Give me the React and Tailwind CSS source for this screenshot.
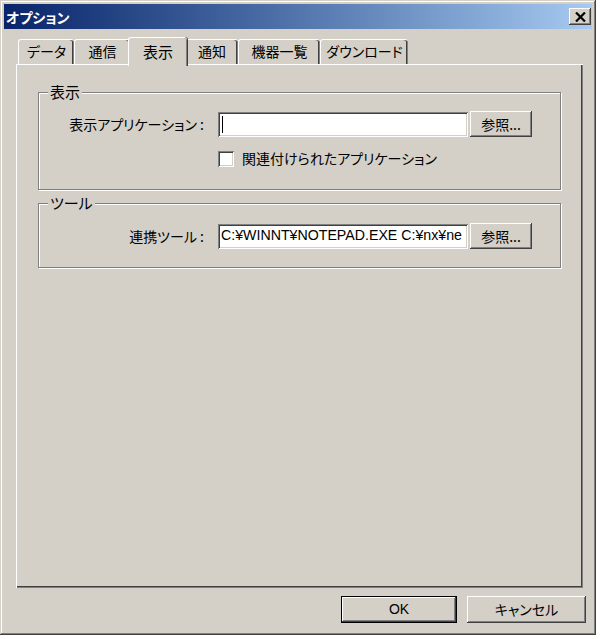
import React from "react";

const jp = "[font-family:'Noto_Sans_CJK_JP','Noto_Sans',sans-serif] [font-feature-settings:'palt']";

const raised =
  "shadow-[inset_-1px_-1px_0_#404040,inset_1px_1px_0_#ffffff,inset_-2px_-2px_0_#808080]";
const sunken =
  "shadow-[inset_1px_1px_0_#808080,inset_-1px_-1px_0_#ffffff,inset_2px_2px_0_#404040,inset_-2px_-2px_0_#d4d0c8]";

const tabs = [
  { label: "データ", w: "w-[56px]" },
  { label: "通信", w: "w-[56px]" },
  { label: "表示", w: "w-[59px]", active: true },
  { label: "通知", w: "w-[53px]" },
  { label: "機器一覧", w: "w-[82px]" },
  { label: "ダウンロード", w: "w-[88px]" },
];

function Tab({ label, w, active }) {
  if (active) {
    return (
      <div
        className={`${w} h-[29px] -mx-[2px] -mb-[2px] relative z-10 bg-[#d4d0c8] rounded-t-[3px] border-t border-l border-white shadow-[inset_-1px_0_0_#808080,1px_0_0_#404040] flex items-start justify-center pt-[3px] text-[15px] text-black`}
      >
        {label}
      </div>
    );
  }
  return (
    <div
      className={`${w} h-[25px] bg-[#d4d0c8] rounded-t-[3px] border-t border-l border-white shadow-[inset_-1px_0_0_#808080,inset_-2px_0_0_#404040] flex items-center justify-center pb-[1px] text-[14px] text-black`}
    >
      {label}
    </div>
  );
}

function Button({ children, className = "", latin }) {
  return (
    <div
      className={`${className} bg-[#d4d0c8] ${raised} flex items-center justify-center text-black ${
        latin ? "[font-family:'Liberation_Sans',sans-serif] text-[14px]" : "text-[14px]"
      }`}
    >
      {children}
    </div>
  );
}

function Group({ title, className = "", children }) {
  return (
    <div
      className={`relative ml-[21px] w-[523px] border border-[#808080] shadow-[inset_1px_1px_0_#ffffff,1px_1px_0_#ffffff] ${className}`}
    >
      <span className="absolute left-[9px] -top-[11px] px-[2px] bg-[#d4d0c8] text-[15px] leading-[20px]">
        {title}
      </span>
      {children}
    </div>
  );
}

export default function App() {
  return (
    <div className={`w-[600px] h-[639px] bg-white ${jp}`}>
      <div
        className="w-[596px] h-[635px] bg-[#d4d0c8] p-[4px] flex flex-col shadow-[inset_-1px_-1px_0_#404040,inset_1px_1px_0_#d4d0c8,inset_-2px_-2px_0_#808080,inset_2px_2px_0_#ffffff]"
      >
        {/* title bar */}
        <div className="h-[25px] bg-gradient-to-r from-[#0a246a] to-[#a6caf0] flex items-center justify-between pl-[2px] pr-[1px]">
          <span className="text-white font-bold text-[14px] leading-none">オプション</span>
          <div className={`w-[22px] h-[17px] bg-[#d4d0c8] ${raised} flex items-center justify-center`}>
            <svg width="11" height="10" viewBox="0 0 11 10">
              <path d="M1 0.5 L10 9.5 M10 0.5 L1 9.5" stroke="#000" strokeWidth="2.2" />
            </svg>
          </div>
        </div>

        {/* tabs */}
        <div className="mt-[8px] ml-[12px] flex flex-col">
          <div className="h-[27px] flex items-end pl-[2px]">
            {tabs.map((t) => (
              <Tab key={t.label} {...t} />
            ))}
          </div>
          <div className="w-[567px] h-[524px] bg-[#d4d0c8] border-t border-l border-white shadow-[inset_-1px_-1px_0_#808080,inset_-2px_-2px_0_#404040] pt-[27px] flex flex-col text-black">
            <Group title="表示" className="h-[98px]">
              <div className="flex items-center mt-[18px]">
                <span className="w-[165px] text-right text-[14px]">表示アプリケーション :</span>
                <div className={`ml-[14px] w-[250px] h-[25px] bg-white ${sunken} flex items-center pl-[4px]`}>
                  <div className="w-px h-[17px] bg-black" />
                </div>
                <Button className="ml-[2px] w-[62px] h-[26px]">参照...</Button>
              </div>
              <div className="flex items-center mt-[11px] ml-[179px]">
                <div className={`w-[16px] h-[16px] bg-white ${sunken}`} />
                <span className="ml-[8px] text-[14px]">関連付けられたアプリケーション</span>
              </div>
            </Group>

            <Group title="ツール" className="h-[65px] mt-[13px]">
              <div className="flex items-center mt-[19px]">
                <span className="w-[165px] text-right text-[14px]">連携ツール :</span>
                <div
                  className={`ml-[14px] w-[250px] h-[25px] bg-white ${sunken} flex items-center pl-[3px] overflow-hidden whitespace-nowrap`}
                >
                  <span className="[font-family:'Liberation_Sans',sans-serif] text-[14.2px]">
                    C:¥WINNT¥NOTEPAD.EXE C:¥nx¥ne
                  </span>
                </div>
                <Button className="ml-[2px] w-[62px] h-[26px]">参照...</Button>
              </div>
            </Group>
          </div>
        </div>

        {/* bottom buttons */}
        <div className="mt-[8px] flex justify-end pr-[6px] gap-[10px]">
          <div className="w-[116px] h-[27px] border border-black">
            <Button latin className="w-full h-full">OK</Button>
          </div>
          <Button className="w-[119px] h-[27px]">キャンセル</Button>
        </div>
      </div>
    </div>
  );
}
